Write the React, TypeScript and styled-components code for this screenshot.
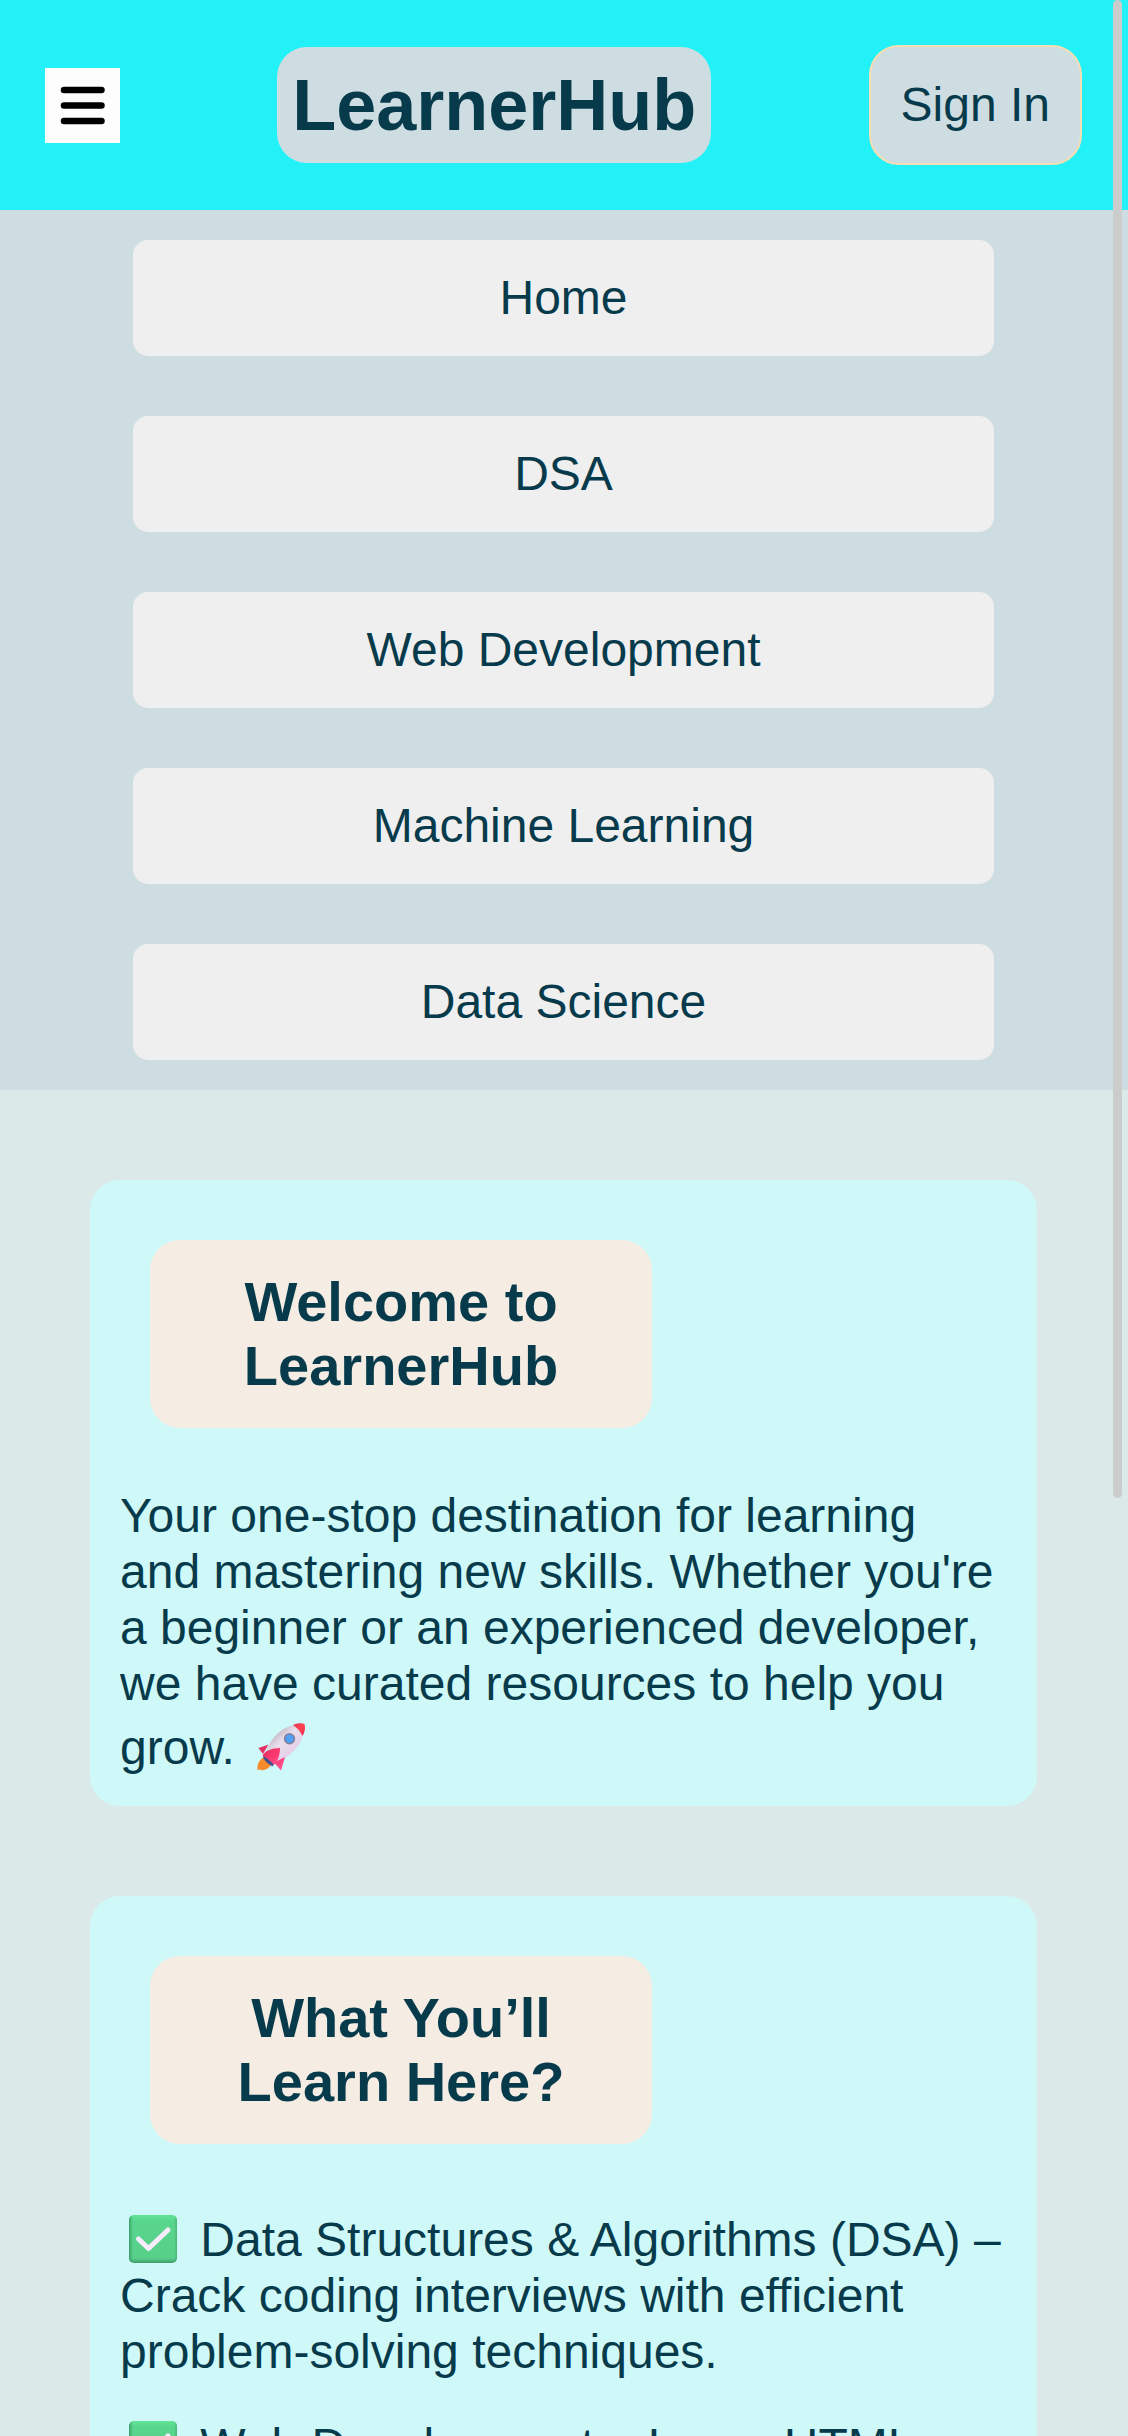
import React from "react";
import styled, { createGlobalStyle } from "styled-components";

const ink = "#073b4c";

const GlobalStyle = createGlobalStyle`
  *, *::before, *::after { box-sizing: border-box; }
  body {
    margin: 0;
    background: #dbe9e8;
    color: ${ink};
    font-family: "Liberation Sans", Arial, Helvetica, sans-serif;
    font-size: 48px;
    line-height: 56px;
  }
`;

const Page = styled.div`
  height: 100vh;
  overflow: hidden;
`;

const Header = styled.header`
  display: flex;
  align-items: center;
  justify-content: space-between;
  padding: 45px 46px 45px 45px;
  background: #23f1f8;
`;

const MenuButton = styled.button`
  display: flex;
  align-items: center;
  justify-content: center;
  width: 75px;
  height: 75px;
  padding: 0;
  border: 0;
  background: #fdfdfd;
  cursor: pointer;
`;

const Logo = styled.h1`
  margin: 0;
  padding: 16px 15px;
  border-radius: 30px;
  background: #cedde1;
  font-size: 72px;
  line-height: 84px;
`;

const SignIn = styled.button`
  padding: 30px;
  border: 2px solid #f5deb3;
  border-radius: 30px;
  background: #cedde1;
  color: inherit;
  font: inherit;
  cursor: pointer;
`;

const NavList = styled.ul`
  display: flex;
  flex-direction: column;
  gap: 60px;
  margin: 0;
  padding: 30px 134px 30px 133px;
  list-style: none;
  background: #cedde1;
`;

const NavButton = styled.button`
  display: block;
  width: 100%;
  padding: 30px;
  border: 0;
  border-radius: 15px;
  background: #efefef;
  color: inherit;
  font: inherit;
  cursor: pointer;
`;

const Main = styled.main`
  display: flex;
  flex-direction: column;
  gap: 90px;
  padding: 90px 91px 90px 90px;
`;

const Card = styled.section`
  padding: 60px 30px 30px;
  border-radius: 30px;
  background: #cff8f8;
`;

const CardTitle = styled.h2`
  width: 502px;
  max-width: 100%;
  margin: 0 30px 60px;
  padding: 30px 60px;
  border-radius: 30px;
  background: #f5ede3;
  font-size: 56px;
  line-height: 64px;
  text-align: center;
`;

const Text = styled.p`
  margin: 0 0 30px;

  &:last-child {
    margin-bottom: 0;
  }
`;

const Emoji = styled.svg`
  width: 48px;
  height: 48px;
  margin: 11px 10px 5px 9px;
  vertical-align: -12px;
`;

const ScrollThumb = styled.div`
  position: fixed;
  top: 0;
  right: 6px;
  width: 9px;
  height: 61.5vh;
  border-radius: 5px;
  background: #cccccc;
`;

const Rocket = () => (
  <Emoji viewBox="0 0 48 48" role="img" aria-label="rocket">
    <defs>
      <linearGradient id="hull" gradientUnits="userSpaceOnUse" x1="16" y1="10" x2="36" y2="32">
        <stop offset="0" stopColor="#bdb3bd" />
        <stop offset="0.4" stopColor="#e8deea" />
        <stop offset="1" stopColor="#e6cdea" />
      </linearGradient>
      <linearGradient id="nose" x1="0" y1="0" x2="1" y2="1">
        <stop offset="0" stopColor="#d92f4b" />
        <stop offset="0.5" stopColor="#ff4555" />
        <stop offset="1" stopColor="#f5264a" />
      </linearGradient>
      <linearGradient id="fin" x1="0" y1="0" x2="1" y2="1">
        <stop offset="0" stopColor="#d92f5c" />
        <stop offset="0.6" stopColor="#ff3a72" />
        <stop offset="1" stopColor="#ff5a9c" />
      </linearGradient>
    </defs>
    <path d="M6.500 34.500C2 37 0 41 0.500 47.500C2 46 3.500 46 5 47.500C9 47 12 45 14 42Z" fill="#f68b2e" />
    <path d="M7 32L17 41L15.500 43.500C11 41 8 38.500 6 34.500Z" fill="#41518e" />
    <path d="M36 2C23 6 14 14 8 31L18 40C31 35 43 25 46 12Z" fill="url(#hull)" />
    <path d="M36 2C40 0 45 -0.500 47.500 1C48.500 5 48 9 45.500 13C43 8 40 5 36 2Z" fill="url(#nose)" />
    <circle cx="32.500" cy="15.700" r="5.700" fill="#857d96" />
    <circle cx="32.500" cy="15.700" r="4.200" fill="#4f9ff6" />
    <path d="M11.500 21.500L1.500 25L6 31Z M28 34L24 47.500L17 39.500Z" fill="url(#fin)" />
    <path d="M23 25C15 25 7 28 5.500 33C9 34 14 38 17 42C21 38 23 32 23 25Z" fill="url(#fin)" />
  </Emoji>
);

const CheckMark = () => (
  <Emoji viewBox="0 0 48 48" role="img" aria-label="check">
    <defs>
      <linearGradient id="tile" x1="0" y1="0" x2="0" y2="1">
        <stop offset="0" stopColor="#62e596" />
        <stop offset="0.12" stopColor="#59d68e" />
        <stop offset="0.9" stopColor="#57d08a" />
        <stop offset="1" stopColor="#3f9c68" />
      </linearGradient>
      <linearGradient id="edge" x1="0" y1="0" x2="1" y2="0">
        <stop offset="0" stopColor="#2f8a5a" stopOpacity="0.7" />
        <stop offset="0.08" stopColor="#2f8a5a" stopOpacity="0" />
        <stop offset="0.94" stopColor="#2f8a5a" stopOpacity="0" />
        <stop offset="1" stopColor="#2f8a5a" stopOpacity="0.4" />
      </linearGradient>
    </defs>
    <rect width="48" height="48" rx="5" fill="url(#tile)" />
    <rect width="48" height="48" rx="5" fill="url(#edge)" />
    <path d="M9.500 24L19.500 33.500L39 15" fill="none" stroke="#f7ecfb" strokeWidth="5" strokeLinecap="round" strokeLinejoin="round" />
  </Emoji>
);

const links = ["Home", "DSA", "Web Development", "Machine Learning", "Data Science"];

const topics = [
  "Data Structures & Algorithms (DSA) – Crack coding interviews with efficient problem-solving techniques.",
  "Web Development – Learn HTML,",
];

export default function App() {
  return (
    <Page>
      <GlobalStyle />
      <Header>
        <MenuButton aria-label="Menu">
          <svg width="75" height="75" viewBox="0 0 75 75" aria-hidden="true">
            <path d="M19 22H56.500M19 37.500H56.500M19 53H56.500" stroke="#000" strokeWidth="6.500" strokeLinecap="round" />
          </svg>
        </MenuButton>
        <Logo>LearnerHub</Logo>
        <SignIn>Sign In</SignIn>
      </Header>
      <nav>
        <NavList>
          {links.map((label) => (
            <li key={label}>
              <NavButton>{label}</NavButton>
            </li>
          ))}
        </NavList>
      </nav>
      <Main>
        <Card>
          <CardTitle>Welcome to LearnerHub</CardTitle>
          <Text>
            Your one-stop destination for learning and mastering new skills. Whether you're a beginner or an
            experienced developer, we have curated resources to help you grow. <Rocket />
          </Text>
        </Card>
        <Card>
          <CardTitle>What You’ll Learn Here?</CardTitle>
          {topics.map((topic) => (
            <Text key={topic}>
              <CheckMark /> {topic}
            </Text>
          ))}
        </Card>
      </Main>
      <ScrollThumb />
    </Page>
  );
}
